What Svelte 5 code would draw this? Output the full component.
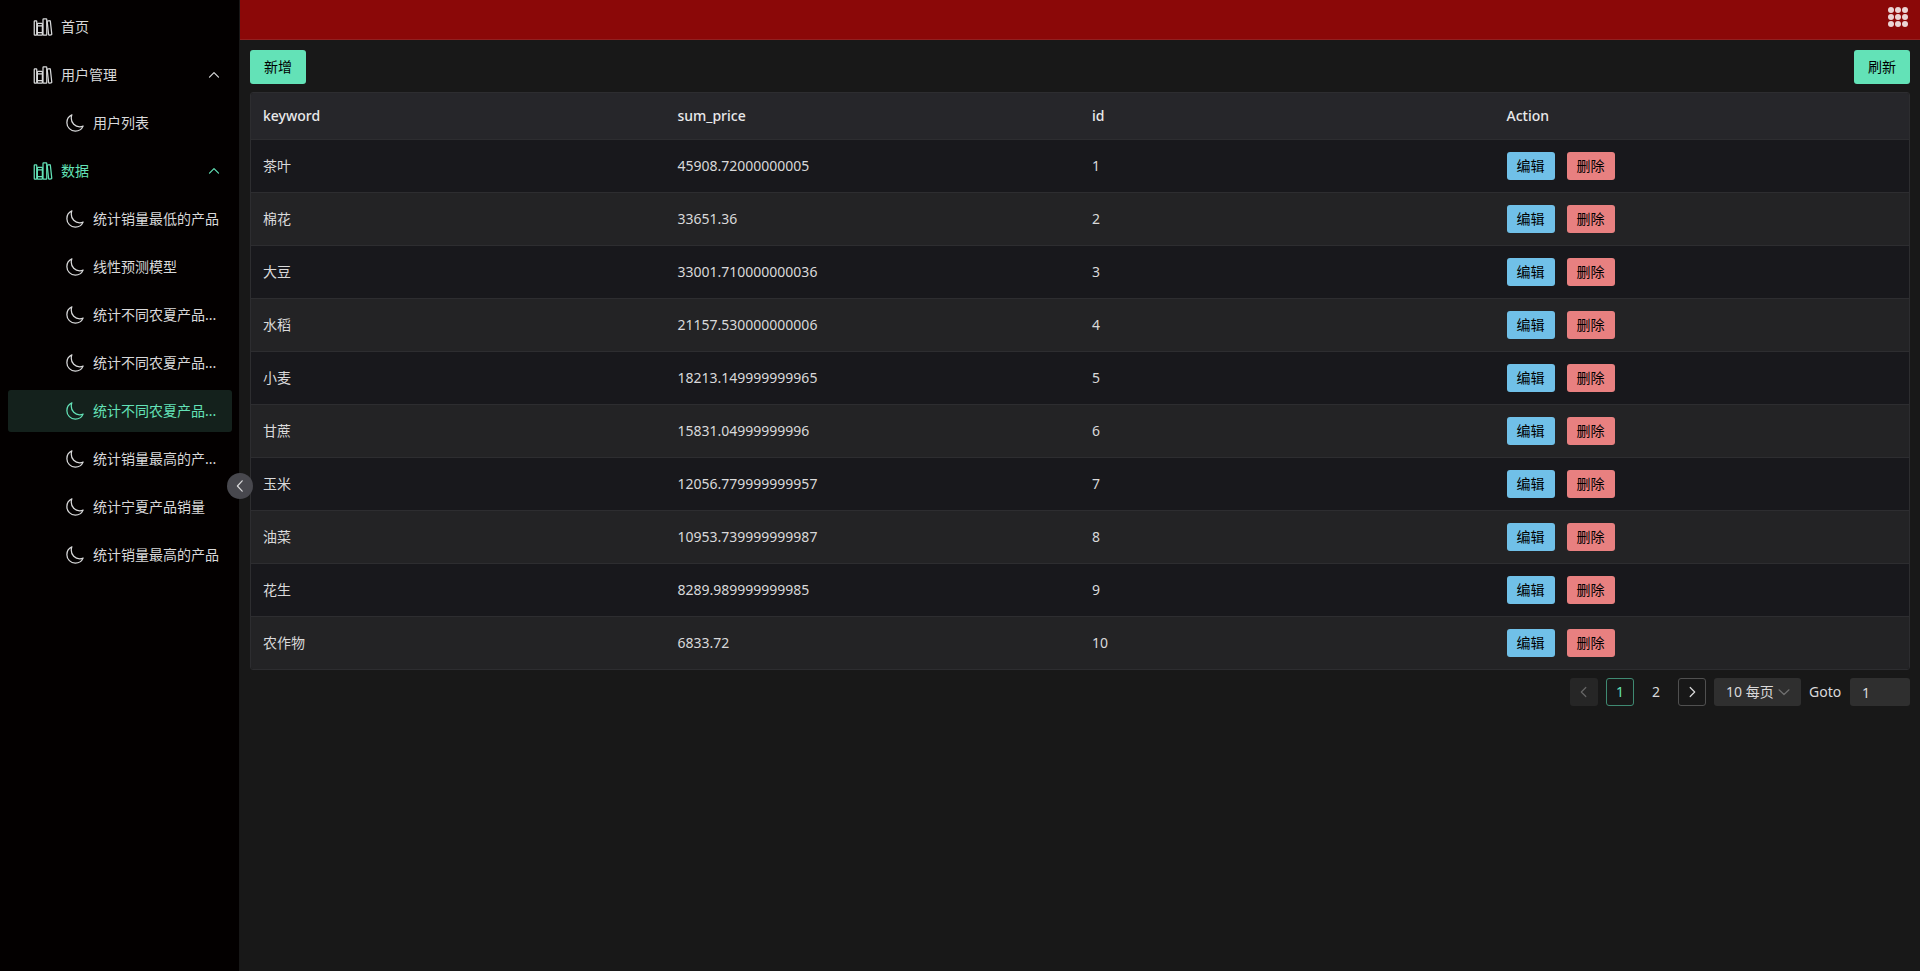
<script lang="ts">
	type Item = { label: string; child?: boolean; open?: boolean; lit?: boolean; active?: boolean };

	const menu: Item[] = [
		{ label: '首页' },
		{ label: '用户管理', open: true },
		{ label: '用户列表', child: true },
		{ label: '数据', open: true, lit: true },
		{ label: '统计销量最低的产品', child: true },
		{ label: '线性预测模型', child: true },
		{ label: '统计不同农夏产品...', child: true },
		{ label: '统计不同农夏产品...', child: true },
		{ label: '统计不同农夏产品...', child: true, lit: true, active: true },
		{ label: '统计销量最高的产...', child: true },
		{ label: '统计宁夏产品销量', child: true },
		{ label: '统计销量最高的产品', child: true }
	];

	const rows = [
		{ keyword: '茶叶', sum_price: '45908.72000000005', id: 1 },
		{ keyword: '棉花', sum_price: '33651.36', id: 2 },
		{ keyword: '大豆', sum_price: '33001.710000000036', id: 3 },
		{ keyword: '水稻', sum_price: '21157.530000000006', id: 4 },
		{ keyword: '小麦', sum_price: '18213.149999999965', id: 5 },
		{ keyword: '甘蔗', sum_price: '15831.04999999996', id: 6 },
		{ keyword: '玉米', sum_price: '12056.779999999957', id: 7 },
		{ keyword: '油菜', sum_price: '10953.739999999987', id: 8 },
		{ keyword: '花生', sum_price: '8289.989999999985', id: 9 },
		{ keyword: '农作物', sum_price: '6833.72', id: 10 }
	];

	const dots = [5, 12, 19];
	let page = $state(1);
</script>

<div class="layout">
	<aside>
		<nav>
			{#each menu as item}
				<a href="#top" class="item" class:child={item.child} class:lit={item.lit} class:active={item.active}>
					{#if item.child}
						<svg class="icon" viewBox="0 0 512 512" aria-hidden="true">
							<path d="M160 136c0-30.62 4.51-61.61 16-88C99.57 81.27 48 159.32 48 248c0 119.29 96.71 216 216 216c88.68 0 166.73-51.57 200-128c-26.39 11.49-57.38 16-88 16c-119.29 0-216-96.71-216-216z" />
						</svg>
					{:else}
						<svg class="icon" viewBox="0 0 512 512" aria-hidden="true">
							<rect x="32" y="96" width="64" height="368" rx="16" />
							<path d="M112 224h128M112 400h128" />
							<rect x="112" y="160" width="128" height="304" rx="16" />
							<rect x="256" y="48" width="96" height="416" rx="16" />
							<path d="M422.46 96.11l-40.4 4.25c-11.12 1.17-19.18 11.57-17.93 23.1l34.92 321.59c1.26 11.53 11.37 20 22.49 18.84l40.4-4.25c11.12-1.17 19.18-11.57 17.93-23.1L445 115c-1.31-11.58-11.42-20.06-22.54-18.89z" />
						</svg>
					{/if}
					<span>{item.label}</span>
					{#if item.open}
						<svg class="chevron" viewBox="0 0 16 16" aria-hidden="true"><path d="M3.5 10.2L8 5.7l4.5 4.5" /></svg>
					{/if}
				</a>
			{/each}
		</nav>
		<button class="toggle" aria-label="收起菜单">
			<svg class="chevron" viewBox="0 0 16 16" aria-hidden="true"><path d="M10.2 2.8L5.4 8l4.8 5.2" /></svg>
		</button>
	</aside>

	<div class="main">
		<header>
			<button class="apps" aria-label="应用">
				<svg viewBox="0 0 24 24" aria-hidden="true">
					{#each dots as cy}
						{#each dots as cx}
							<circle {cx} {cy} r="3" />
						{/each}
					{/each}
				</svg>
			</button>
		</header>

		<main>
			<div class="toolbar">
				<button class="primary">新增</button>
				<button class="primary">刷新</button>
			</div>

			<div class="table-wrap">
				<table>
					<thead>
						<tr>
							<th>keyword</th>
							<th>sum_price</th>
							<th>id</th>
							<th>Action</th>
						</tr>
					</thead>
					<tbody>
						{#each rows as row}
							<tr>
								<td>{row.keyword}</td>
								<td>{row.sum_price}</td>
								<td>{row.id}</td>
								<td>
									<div class="actions">
										<button class="edit">编辑</button>
										<button class="delete">删除</button>
									</div>
								</td>
							</tr>
						{/each}
					</tbody>
				</table>
			</div>

			<div class="pagination">
				<button class="page disabled" disabled aria-label="上一页">
					<svg class="chevron" viewBox="0 0 16 16" aria-hidden="true"><path d="M9.8 3.5L5.3 8l4.5 4.5" /></svg>
				</button>
				{#each [1, 2] as n}
					<button class="page" class:current={page === n} onclick={() => (page = n)}>{n}</button>
				{/each}
				<button class="page bordered" aria-label="下一页">
					<svg class="chevron" viewBox="0 0 16 16" aria-hidden="true"><path d="M6.2 3.5L10.7 8l-4.5 4.5" /></svg>
				</button>
				<div class="size">
					<select aria-label="每页条数">
						<option>10 每页</option>
					</select>
					<svg class="chevron" viewBox="0 0 16 16" aria-hidden="true"><path d="M3 5.8L8 10.5l5-4.7" /></svg>
				</div>
				<label for="goto">Goto</label>
				<input id="goto" type="text" value={page} />
			</div>
		</main>
	</div>
</div>

<style>
	:global(body) {
		background: #181818;
	}

	.layout {
		display: flex;
		min-height: 100vh;
		color: #d9d9da;
		font-family: 'Noto Sans', 'Noto Sans CJK SC', sans-serif;
		font-size: 14px;
		line-height: 22px;
	}

	button,
	input,
	select {
		box-sizing: border-box;
		margin: 0;
		padding: 0;
		border: none;
		border-radius: 3px;
		font: inherit;
		color: inherit;
	}
	button {
		cursor: pointer;
	}

	aside {
		position: relative;
		box-sizing: border-box;
		flex: none;
		width: 240px;
		background: #030000;
		border-right: 1px solid #171717;
	}
	nav {
		padding-bottom: 6px;
	}
	.item {
		display: flex;
		align-items: center;
		height: 42px;
		margin: 6px 7px 0 8px;
		padding: 0 10px 0 25px;
		box-sizing: border-box;
		border-radius: 3px;
		color: inherit;
		text-decoration: none;
		white-space: nowrap;
	}
	.item.child {
		padding-left: 57px;
	}
	.item span {
		flex: 1;
	}
	.item.lit {
		color: #63e2b7;
	}
	.item.active {
		background: #14211c;
	}
	.icon {
		width: 20px;
		height: 20px;
		margin-right: 8px;
		fill: none;
		stroke: currentColor;
		stroke-width: 32;
		stroke-linejoin: round;
	}
	.chevron {
		width: 16px;
		height: 16px;
		fill: none;
		stroke: currentColor;
		stroke-width: 1.2;
		stroke-linecap: round;
		stroke-linejoin: round;
	}
	.toggle {
		position: absolute;
		top: 50%;
		right: -14px;
		display: flex;
		align-items: center;
		justify-content: center;
		width: 26px;
		height: 26px;
		border-radius: 50%;
		background: #48484e;
		transform: translateY(-50%);
	}

	.main {
		flex: 1;
		min-width: 0;
	}
	header {
		display: flex;
		justify-content: flex-end;
		box-sizing: border-box;
		height: 40px;
		padding: 5px 10px 0;
		background: #8b0808;
		border-bottom: 1px solid #912020;
	}
	.apps {
		width: 24px;
		height: 24px;
		background: none;
	}
	.apps svg {
		display: block;
		fill: #ebd5d5;
	}

	main {
		display: flex;
		flex-direction: column;
		gap: 8px;
		padding: 10px;
	}
	.toolbar {
		display: flex;
		justify-content: space-between;
	}
	.primary {
		height: 34px;
		padding: 0 14px;
		background: #63e2b7;
		color: #000;
	}

	.table-wrap {
		border: 1px solid #2d2d30;
		border-radius: 3px;
		overflow: hidden;
	}
	table {
		width: 100%;
		table-layout: fixed;
		border-collapse: separate;
		border-spacing: 0;
	}
	th,
	td {
		padding: 12px;
		border-bottom: 1px solid #2d2d30;
		text-align: left;
	}
	th {
		background: #26262a;
		color: #e9e9ea;
		font-weight: 500;
	}
	td {
		background: #18181c;
	}
	tbody tr:nth-child(even) td {
		background: #232325;
	}
	tbody tr:last-child td {
		border-bottom: none;
	}
	.actions {
		display: flex;
		gap: 12px;
	}
	.actions button {
		height: 28px;
		padding: 0 10px;
		color: #000;
	}
	.actions .edit {
		background: #70c0e8;
	}
	.actions .delete {
		background: #e88080;
	}

	.pagination {
		display: flex;
		align-items: center;
		justify-content: flex-end;
		gap: 8px;
	}
	.page {
		display: flex;
		align-items: center;
		justify-content: center;
		width: 28px;
		height: 28px;
		background: none;
		border: 1px solid transparent;
	}
	.page.current {
		border-color: #3f8a72;
		color: #63e2b7;
	}
	.page.bordered {
		border-color: #505050;
	}
	.page.disabled {
		background: #262626;
		color: #666;
	}
	.size {
		position: relative;
		width: 87px;
	}
	.size select {
		display: block;
		appearance: none;
		width: 100%;
		height: 28px;
		padding: 0 24px 0 12px;
		background: #2f2f2f;
	}
	.size .chevron {
		position: absolute;
		top: 6px;
		right: 9px;
		color: #707070;
		pointer-events: none;
	}
	.pagination label {
		min-width: 33px;
	}
	.pagination input {
		width: 60px;
		height: 28px;
		padding: 0 12px;
		background: #2f2f2f;
	}
</style>
